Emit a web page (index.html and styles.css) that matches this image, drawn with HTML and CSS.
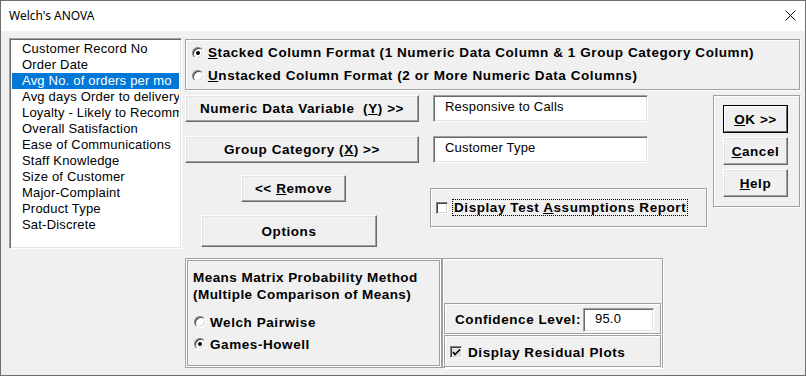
FILE: index.html
```html
<!DOCTYPE html>
<html>
<head>
<meta charset="utf-8">
<link rel="stylesheet" href="styles.css">
</head>
<body>
<div class="window">
  <div class="titlebar">
    <span class="title">Welch's ANOVA</span>
    <svg class="close" width="11" height="11" viewBox="0 0 11 11"><path d="M0.5 0.5L10.5 10.5M10.5 0.5L0.5 10.5" stroke="#000" stroke-width="1" fill="none"/></svg>
  </div>
  <div class="client">
    <div class="listbox">
      <div class="item">Customer Record No</div>
      <div class="item">Order Date</div>
      <div class="item selected">Avg No. of orders per mo</div>
      <div class="item">Avg days Order to delivery</div>
      <div class="item">Loyalty - Likely to Recommend</div>
      <div class="item">Overall Satisfaction</div>
      <div class="item">Ease of Communications</div>
      <div class="item">Staff Knowledge</div>
      <div class="item">Size of Customer</div>
      <div class="item">Major-Complaint</div>
      <div class="item">Product Type</div>
      <div class="item">Sat-Discrete</div>
    </div>
    <div class="main">
      <div class="group radiogroup">
        <div class="radiorow"><span class="radio checked"></span><span class="lbl"><u>S</u>tacked Column Format (1 Numeric Data Column &amp; 1 Group Category Column)</span></div>
        <div class="radiorow"><span class="radio"></span><span class="lbl"><u>U</u>nstacked Column Format (2 or More Numeric Data Columns)</span></div>
      </div>
      <div class="middle">
        <div class="midleft">
          <div class="row">
            <div class="btn btn-var"><span>Numeric Data Variable&nbsp; (<u>Y</u>) &gt;&gt;</span></div>
            <div class="field">Responsive to Calls</div>
          </div>
          <div class="row row2">
            <div class="btn btn-var"><span>Group Category (<u>X</u>) &gt;&gt;</span></div>
            <div class="field">Customer Type</div>
          </div>
          <div class="row row3">
            <div class="btncol">
              <div class="btn btn-remove"><span>&lt;&lt; <u>R</u>emove</span></div>
              <div class="btn btn-options"><span>Options</span></div>
            </div>
            <div class="group checkgroup">
              <span class="check"></span><span class="lbl focus">Display Test <u>A</u>ssumptions Report</span>
            </div>
          </div>
        </div>
        <div class="group okgroup">
          <div class="btn btn-ok default"><span><u>O</u>K &gt;&gt;</span></div>
          <div class="btn btn-ok"><span><u>C</u>ancel</span></div>
          <div class="btn btn-ok"><span><u>H</u>elp</span></div>
        </div>
      </div>
      <div class="bottom">
        <div class="group dbl meansgroup">
          <div class="lbl heading">Means Matrix Probability Method<br>(Multiple Comparison of Means)</div>
          <div class="radiorow r-welch"><span class="radio"></span><span class="lbl">Welch Pairwise</span></div>
          <div class="radiorow r-games"><span class="radio checked"></span><span class="lbl">Games-Howell</span></div>
        </div>
        <div class="group confgroup">
          <div class="group sub conf">
            <span class="lbl">Confidence Level:</span>
            <div class="field small">95.0</div>
          </div>
          <div class="group sub resid">
            <span class="check checked grey"><svg width="9" height="9" viewBox="0 0 9 9"><path d="M1 4L3 6.5L8 1.5" stroke="#000" stroke-width="1.6" fill="none"/></svg></span><span class="lbl">Display Residual Plots</span>
          </div>
        </div>
      </div>
    </div>
  </div>
</div>
</body>
</html>
```

FILE: styles.css
```css
* { box-sizing: border-box; }
html, body { margin: 0; padding: 0; }
body { width: 806px; height: 376px; overflow: hidden; background: #fff; }

.window {
  width: 806px; height: 376px;
  border: 1px solid #6e6e6e;
  display: flex; flex-direction: column;
  font-family: "Liberation Sans", Arial, sans-serif;
  font-size: 13px; letter-spacing: 0.2px; color: #000;
}
.titlebar {
  height: 30px; background: #fff;
  display: flex; align-items: center; justify-content: space-between;
  padding: 0 9px 2px 8px;
}
.title { font-family: "Noto Sans", "Open Sans", sans-serif; font-size: 12px; letter-spacing: 0; }

.client {
  flex: 1; background: #f0f0f0;
  display: flex; align-items: flex-start;
  padding: 7px 0 0 8px;
}

.listbox {
  width: 173px; height: 211px;
  background: #fff;
  border: 1px solid; border-color: #a0a0a0 #fff #fff #a0a0a0;
  box-shadow: inset 1px 1px #696969, inset -1px -1px #e3e3e3;
  padding: 2px 2px 0 2px;
  overflow: hidden;
}
.item { height: 16px; line-height: 16px; padding-left: 10px; white-space: nowrap; overflow: hidden; }
.item.selected { background: #0078d7; color: #fff; }

.main { margin-left: 3px; margin-top: 1px; width: 615px; display: flex; flex-direction: column; }

.group {
  border: 1px solid #a0a0a0;
  box-shadow: inset 1px 1px #fff, 1px 1px #fff;
}
.group.dbl { box-shadow: inset 0 0 0 1px #fff, inset 0 0 0 2px #a0a0a0; }

.lbl, .btn { font-weight: bold; white-space: nowrap; font-size: 13.5px; letter-spacing: 0.57px; }

.radiogroup { height: 51px; padding: 1px 0 0 6px; }
.radiorow { display: flex; align-items: center; height: 23px; }
.radiorow .lbl { margin-left: 4px; }
.radio {
  width: 12px; height: 12px; border-radius: 50%;
  background: #fff;
  border: 1px solid; border-color: #808080 #fff #fff #808080;
  box-shadow: inset 1px 1px #404040, inset -1px -1px #d4d4d4;
  position: relative; flex: none;
}
.radio.checked::after {
  content: ""; position: absolute; left: 3px; top: 3px;
  width: 4px; height: 4px; border-radius: 50%; background: #000;
}

.middle { display: flex; margin-top: 5px; }
.midleft { width: 528px; display: flex; flex-direction: column; }
.row { display: flex; align-items: flex-start; }
.row2 { margin-top: 14px; }
.row3 { margin-top: 12px; }

.btn {
  height: 27px;
  display: flex; align-items: center; justify-content: center;
  background: #f0f0f0;
  border: 1px solid; border-color: #fff #696969 #696969 #fff;
  box-shadow: inset -1px -1px #a0a0a0, inset 1px 1px #e3e3e3;
}
.btn-var { width: 234px; }
.field {
  margin-left: 14px; width: 215px; height: 27px;
  background: #fff;
  border: 1px solid; border-color: #a0a0a0 #fff #fff #a0a0a0;
  box-shadow: inset 1px 1px #696969, inset -1px -1px #e3e3e3;
  padding: 3px 0 0 11px;
  white-space: nowrap; font-weight: normal;
}
.btncol { width: 245px; display: flex; flex-direction: column; align-items: flex-start; }
.btn-remove { margin-left: 56px; width: 105px; }
.btn-options { margin-left: 16px; margin-top: 13px; width: 176px; height: 32px; }

.checkgroup {
  margin-top: 13px; width: 277px; height: 39px;
  display: flex; align-items: center; padding-left: 5px;
}
.check {
  width: 12px; height: 12px; background: #fff; flex: none;
  border: 1px solid; border-color: #808080 #fff #fff #808080;
  box-shadow: inset 1px 1px #404040, inset -1px -1px #d4d4d4;
  display: flex; align-items: center; justify-content: center;
}
.check.grey { background: #e3e3e3; }
.checkgroup .lbl { margin-left: 5px; }
.focus { outline: 1px dotted #000; outline-offset: 0; padding: 0 1px; }

.okgroup {
  width: 87px; height: 112px;
  display: flex; flex-direction: column; align-items: flex-start;
  padding: 9px 0 0 9px;
}
.btn-ok { width: 65px; height: 28px; margin-bottom: 4px; }
.btn-ok.default { border: 1px solid #000; box-shadow: none; padding: 0; }
.btn-ok.default span {
  flex: 1; align-self: stretch;
  display: flex; align-items: center; justify-content: center;
  border: 1px solid; border-color: #fff #696969 #696969 #fff;
}

.bottom { display: flex; margin-top: 11px; }
.meansgroup { width: 257px; height: 110px; padding: 10px 0 0 7px; }
.heading { line-height: 17px; letter-spacing: 0.45px; }
.r-welch { margin-top: 8px; height: 22px; }
.r-games { height: 22px; }
.meansgroup .radiorow { padding-left: 1px; }

.confgroup {
  width: 221px; height: 110px;
  display: flex; flex-direction: column; justify-content: flex-end;
  padding: 0 2px 0 1px;
}
.sub { width: 217px; display: flex; align-items: center; }
.conf { height: 31px; padding: 2px 0 0 10px; }
.conf .field.small { margin-left: 2px; width: 71px; height: 24px; padding: 2px 0 0 11px; }
.resid { height: 32px; margin-top: 1px; padding: 2px 0 0 5px; }
.resid .lbl { margin-left: 6px; }
```
